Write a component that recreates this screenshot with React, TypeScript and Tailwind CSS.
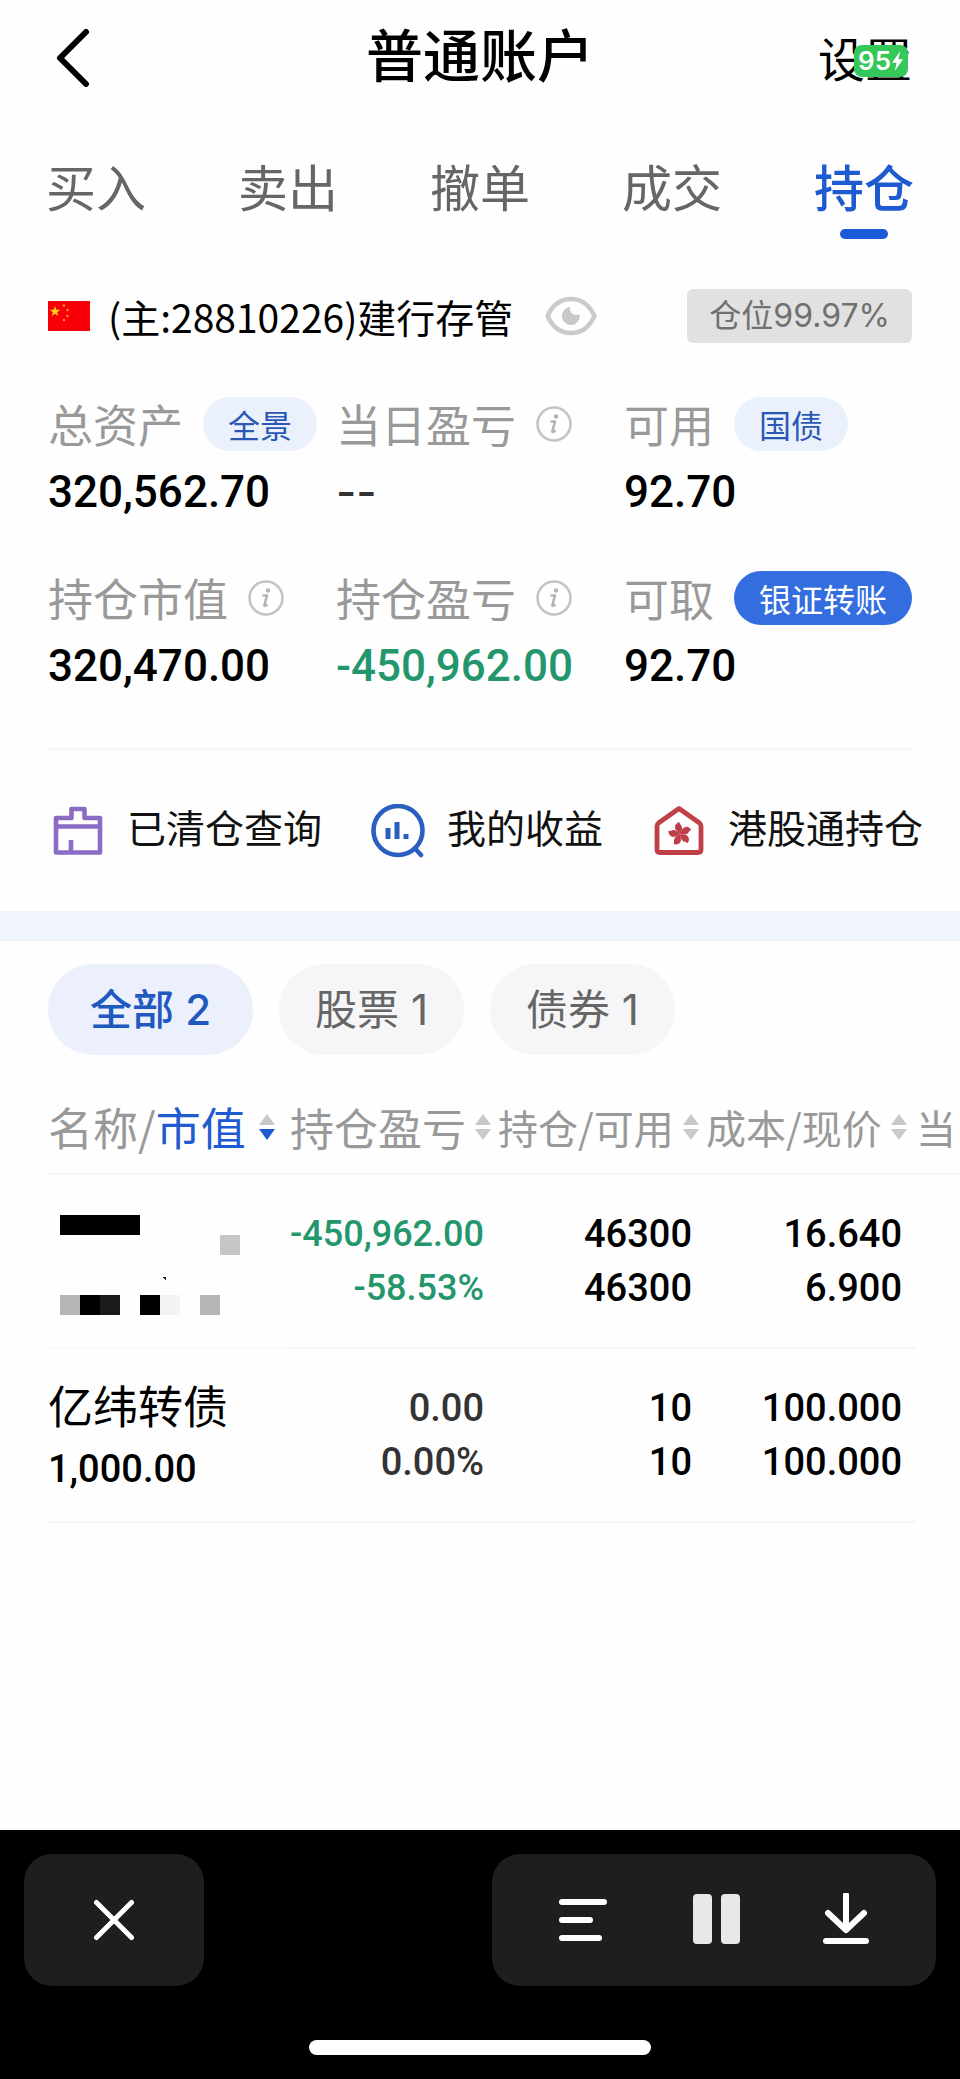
import React from 'react';

const tabs = ['买入', '卖出', '撤单', '成交', '持仓'];

const filters = [
  { label: '全部', count: 2 },
  { label: '股票', count: 1 },
  { label: '债券', count: 1 },
];

const InfoIcon = () => (
  <svg viewBox="0 0 36 36" className="size-9 shrink-0" fill="none" stroke="#c4c4c4">
    <circle cx="18" cy="18" r="16.5" strokeWidth="2.6" />
    <circle cx="20" cy="10.5" r="2.2" fill="#b4b4b4" stroke="none" />
    <path d="M14.500 15.500h4.500l-2.600 9.500c-.3 1.200.8 1.200 3-.6" stroke="#b4b4b4" strokeWidth="2.600" strokeLinejoin="round" />
  </svg>
);

const FlagIcon = () => (
  <svg viewBox="0 0 42 30" className="h-[30px] w-[42px]">
    <rect width="42" height="30" fill="#f70007" />
    <path d="M7 5l1.300 3.700 3.900.1-3.100 2.400 1.100 3.800L7 12.800l-3.200 2.200 1.100-3.800-3.100-2.400 3.900-.1z" fill="#ffd21c" />
    <g fill="#f7902a">
      <circle cx="16" cy="4.500" r="1.300" />
      <circle cx="19.500" cy="9" r="1.300" />
      <circle cx="19.500" cy="15" r="1.300" />
      <circle cx="16" cy="19" r="1.300" />
    </g>
  </svg>
);

const EyeIcon = () => (
  <svg viewBox="0 0 52 40" className="h-10 w-[52px]">
    <path
      d="M2.500 20C8 8 17 3 26 3s18 5 23.500 17C44 32 35 37 26 37S8 32 2.500 20z"
      fill="none"
      stroke="#cbcbcb"
      strokeWidth="4.500"
      strokeLinejoin="round"
    />
    <path d="M25 11c-1 5 3 9 9.700 7.500A9 9 0 1 1 25 11z" fill="#c8c8c8" />
  </svg>
);

const BoxIcon = () => (
  <svg viewBox="0 0 54 54" className="size-[54px]" fill="none" stroke="#8a6cc4" strokeWidth="4.600" strokeLinejoin="round">
    <path d="M5 14h15.500V5h13v9H49v34.500H5z" />
    <path d="M5 22.500h44M20 49V36" />
  </svg>
);

const ProfitIcon = () => (
  <svg viewBox="0 0 54 54" className="size-[54px]" fill="none" stroke="#2a5fc0" strokeWidth="4.600">
    <circle cx="27" cy="26.500" r="24.500" />
    <path d="M44 44.500l6 6.500" strokeLinecap="round" />
    <path d="M17 24v11M26 18v17M35 30v5" strokeWidth="5" />
  </svg>
);

const HongKongIcon = () => (
  <svg viewBox="0 0 54 54" className="size-[54px]">
    <path
      d="M27 4.500L47.500 19c1 .8 1.500 1.700 1.500 3v23.500c0 2-1 3-3 3H8c-2 0-3-1-3-3V22c0-1.300.5-2.200 1.500-3z"
      fill="none"
      stroke="#c04048"
      strokeWidth="4.800"
      strokeLinejoin="round"
    />
    <g fill="#bd3f49">
      {[0, 72, 144, 216, 288].map((angle) => (
        <path key={angle} d="M28.500 30c-2-2-6-3.500-5.500-7.500.3-2 1.800-3.500 4.300-4.500.2 2.500 2.700 3 2.700 6 0 2.500-.8 4-1.500 6z" transform={`rotate(${angle} 28 30)`} />
      ))}
    </g>
  </svg>
);

const SortIcon = ({ active = false }: { active?: boolean }) => (
  <svg viewBox="0 0 18 26" className="h-[26px] w-[18px] shrink-0">
    <path d="M9 0l8 11H1z" fill="#c9c9c9" />
    <path d="M9 26l8-11H1z" fill={active ? '#1f5bd0' : '#c9c9c9'} />
  </svg>
);

// hidden stock name and market value
const Mosaic = () => (
  <svg viewBox="0 0 180 100" className="ml-3 h-[100px] w-[180px]" shapeRendering="crispEdges">
    <path d="M0 0h80v20H0zM20 80h20v20H20zM80 80h20v20H80z" fill="#000" />
    <path d="M40 80h20v20H40z" fill="#1a1a1a" />
    <path d="M0 80h20v20H0zM140 80h20v20h-20z" fill="#b5b5b5" />
    <path d="M160 20h20v20h-20z" fill="#c6c6c6" />
    <path d="M100 80h20v20h-20z" fill="#f3f3f3" />
    <path d="M102 62h4v3z" fill="#222" />
  </svg>
);

type StatProps = {
  label: string;
  value: string;
  valueClass?: string;
  children?: React.ReactNode;
};

const Stat = ({ label, value, valueClass = "font-['Roboto',sans-serif] text-black", children }: StatProps) => (
  <div>
    <div className="flex h-[54px] items-center gap-5 whitespace-nowrap text-[45px] text-[#999]">
      <span>{label}</span>
      {children}
    </div>
    <div className={`mt-[14px] text-[44px] leading-[54px] font-medium ${valueClass}`}>{value}</div>
  </div>
);

const Pill = ({ text, solid = false }: { text: string; solid?: boolean }) => (
  <button
    className={`h-[54px] rounded-full px-[25px] text-[32px] ${solid ? 'bg-[#346de0] text-white' : 'bg-[#eaf1fc] text-[#2a58b4]'}`}
  >
    {text}
  </button>
);

const Cell = ({ lines, className = 'text-[38px] text-black' }: { lines: string[]; className?: string }) => (
  <td className={`border-b-2 border-[#f6f6f6] pr-[14px] text-right leading-[54px] font-medium ${className}`}>
    {lines.map((line, i) => (
      <div key={i}>{line}</div>
    ))}
  </td>
);

const App = () => {
  return (
    <div className="flex min-h-screen flex-col overflow-x-hidden bg-[#fefefe] font-['Noto_Sans_CJK_SC',sans-serif]">
      <header className="grid h-[115px] grid-cols-3 items-center px-12">
        <button aria-label="返回" className="pl-2">
          <svg viewBox="0 0 34 58" className="h-[58px] w-[34px]" fill="none" stroke="#000" strokeWidth="6" strokeLinecap="round" strokeLinejoin="round">
            <path d="M30 3L4 29l26 26" />
          </svg>
        </button>
        <h1 className="text-center font-['Liberation_Sans','Noto_Sans_CJK_SC',sans-serif] text-[57px] font-medium whitespace-nowrap text-black">
          普通账户
        </h1>
        <div className="relative justify-self-end">
          <button className="text-[47px] text-black">设置</button>
          <span className="absolute top-1/2 right-1 flex h-8 w-[54px] -translate-y-[13px] items-center justify-center rounded-lg bg-[#34c759] font-['Inter',sans-serif] text-[26px] font-semibold text-white">
            95
            <svg viewBox="0 0 14 24" className="h-[22px] w-[13px]" fill="#fff">
              <path d="M10 1L1 14h5L4 23l9-13H8z" />
            </svg>
          </span>
        </div>
      </header>

      <nav className="grid grid-cols-5 pt-10">
        {tabs.map((tab) => (
          <button
            key={tab}
            className={`flex flex-col items-center gap-[14px] text-[50px] leading-[60px] ${tab === '持仓' ? 'font-medium text-[#1f5bd0]' : 'text-[#666]'}`}
          >
            {tab}
            {tab === '持仓' && <span className="h-[10px] w-12 rounded-full bg-[#1c5bd8]"></span>}
          </button>
        ))}
      </nav>

      <section className="px-12 pt-[50px]">
        <div className="flex h-[54px] items-center whitespace-nowrap">
          <FlagIcon />
          <span className="ml-[18px] text-[39px] text-black">(主:28810226)建行存管</span>
          <button aria-label="显示金额" className="ml-8">
            <EyeIcon />
          </button>
          <span className="ml-auto flex h-[54px] items-center rounded-md bg-[#e1e1e1] px-[22px] font-['Inter','Noto_Sans_CJK_SC',sans-serif] text-[32px] text-[#707070]">
            仓位99.97%
          </span>
        </div>

        <div className="mt-[54px] grid grid-cols-3 gap-y-[52px]">
          <Stat label="总资产" value="320,562.70">
            <Pill text="全景" />
          </Stat>
          <Stat label="当日盈亏" value="--" valueClass="font-['Inter',sans-serif] text-[#333]">
            <InfoIcon />
          </Stat>
          <Stat label="可用" value="92.70">
            <Pill text="国债" />
          </Stat>
          <Stat label="持仓市值" value="320,470.00">
            <InfoIcon />
          </Stat>
          <Stat label="持仓盈亏" value="-450,962.00" valueClass="font-['Roboto',sans-serif] text-[#24966c]">
            <InfoIcon />
          </Stat>
          <Stat label="可取" value="92.70">
            <Pill text="银证转账" solid />
          </Stat>
        </div>
        <hr className="mt-[55px] border-t-2 border-[#f6f6f6]" />
      </section>

      <section className="flex h-[161px] items-center justify-between pr-[37px] pl-[51px] font-['Liberation_Sans','Noto_Sans_CJK_SC',sans-serif] text-[39px] whitespace-nowrap text-[#111]">
        <button className="flex items-center gap-[22px]">
          <BoxIcon />
          已清仓查询
        </button>
        <button className="flex items-center gap-[22px]">
          <ProfitIcon />
          我的收益
        </button>
        <button className="flex items-center gap-[22px]">
          <HongKongIcon />
          港股通持仓
        </button>
      </section>

      <div className="h-[30px] bg-[#f0f4fc]"></div>

      <section className="pb-16 pl-12">
        <div className="flex gap-[26px] pt-[23px] font-['Inter','Noto_Sans_CJK_SC',sans-serif]">
          {filters.map((filter, i) => (
            <button
              key={filter.label}
              className={`h-[91px] rounded-full text-[42px] ${i === 0 ? 'bg-[#ebf0fc] px-[42px] font-medium text-[#2058c0]' : 'bg-[#f6f6f8] px-9 text-[#666]'}`}
            >
              {filter.label} {filter.count}
            </button>
          ))}
        </div>

        <table className="mt-[25px] w-full table-fixed">
          <colgroup>
            <col />
            <col className="w-[208px]" />
            <col className="w-[208px]" />
            <col className="w-[210px]" />
            <col className="w-11" />
          </colgroup>
          <thead>
            <tr className="h-[94px] border-b-2 border-[#f4f4f4] text-left whitespace-nowrap text-[#999]">
              <th className="p-0 font-normal">
                <button className="flex items-center gap-3 text-[45px]">
                  <span>
                    名称/<span className="text-[#1f5bd0]">市值</span>
                  </span>
                  <SortIcon active />
                </button>
              </th>
              <th className="p-0 font-normal">
                <button className="flex items-center gap-2 text-[44px]">
                  持仓盈亏
                  <SortIcon />
                </button>
              </th>
              <th className="p-0 font-normal">
                <button className="flex items-center gap-2 text-[40px]">
                  持仓/可用
                  <SortIcon />
                </button>
              </th>
              <th className="p-0 font-normal">
                <button className="flex items-center gap-2 text-[40px]">
                  成本/现价
                  <SortIcon />
                </button>
              </th>
              <th className="p-0 text-[40px] font-normal">当</th>
            </tr>
          </thead>
          <tbody className="font-['Roboto','Noto_Sans_CJK_SC',sans-serif]">
            <tr className="h-[174px]">
              <td className="border-b-2 border-[#fafafa] pt-2">
                <Mosaic />
              </td>
              <Cell lines={['-450,962.00', '-58.53%']} className="text-[36px] text-[#24966c]" />
              <Cell lines={['46300', '46300']} />
              <Cell lines={['16.640', '6.900']} />
              <td></td>
            </tr>
            <tr className="h-[174px]">
              <td className="border-b-2 border-[#f6f6f6] text-black">
                <div className="font-['Noto_Sans_CJK_SC',sans-serif] text-[45px] leading-[68px]">亿纬转债</div>
                <div className="text-[38px] leading-[60px] font-medium">1,000.00</div>
              </td>
              <Cell lines={['0.00', '0.00%']} className="text-[38px] text-[#333]" />
              <Cell lines={['10', '10']} />
              <Cell lines={['100.000', '100.000']} />
              <td></td>
            </tr>
          </tbody>
        </table>
      </section>

      <footer className="mt-auto flex flex-col bg-black px-6 pt-6 pb-6">
        <div className="flex justify-between">
          <button aria-label="关闭" className="flex h-[132px] w-[180px] items-center justify-center rounded-[28px] bg-[#1e1e1e]">
            <svg viewBox="0 0 42 42" className="size-[42px]" stroke="#fff" strokeWidth="5" strokeLinecap="round">
              <path d="M3.500 3.500l35 35M38.500 3.500l-35 35" />
            </svg>
          </button>
          <div className="flex h-[132px] w-[444px] items-center justify-between rounded-[28px] bg-[#1e1e1e] pr-[60px] pl-16">
            <button aria-label="菜单">
              <svg viewBox="0 0 54 54" className="size-[54px]" stroke="#fff" strokeWidth="6" strokeLinecap="round">
                <path d="M6 9h42M6 27h28M6 45h37" />
              </svg>
            </button>
            <button aria-label="暂停">
              <svg viewBox="0 0 54 54" className="size-[54px]" fill="#e8e8e8">
                <rect x="4" y="1" width="19" height="50" rx="4" />
                <rect x="32" y="1" width="19" height="50" rx="4" />
              </svg>
            </button>
            <button aria-label="下载">
              <svg viewBox="0 0 54 54" className="size-[54px]" fill="none" stroke="#fff" strokeWidth="6" strokeLinecap="round" strokeLinejoin="round">
                <path d="M24 2v34M6 20l18 17 18-17M4 48h40" />
              </svg>
            </button>
          </div>
        </div>
        <div className="mt-[54px] h-[15px] w-[342px] self-center rounded-full bg-white"></div>
      </footer>
    </div>
  );
};

export default App;
